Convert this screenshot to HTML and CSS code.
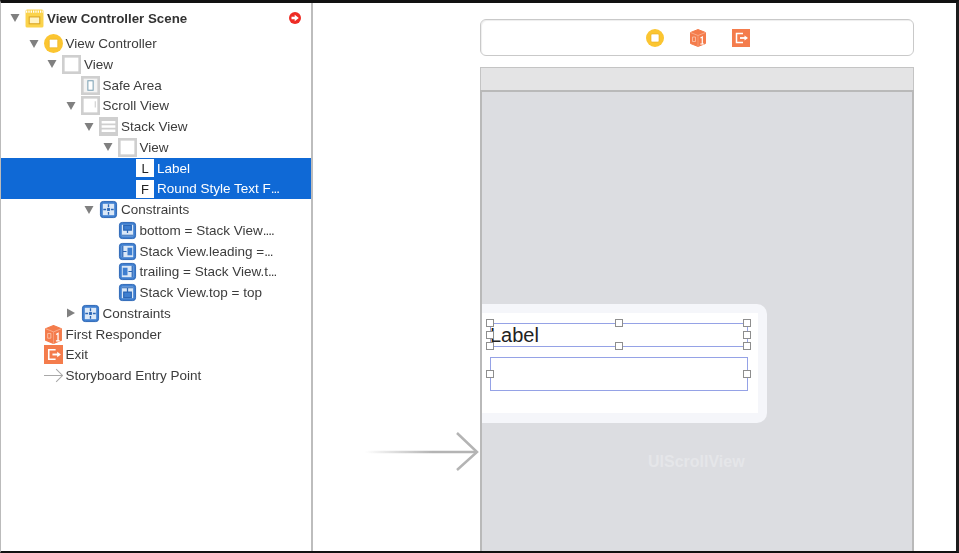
FILE: index.html
```html
<!DOCTYPE html>
<html lang="en">
<head>
  <meta charset="UTF-8">
  <title>View Controller Scene</title>
  <link rel="stylesheet" href="styles.css">
</head>
<body>
<svg class="defs" width="0" height="0">
  <symbol id="i-down" viewBox="0 0 12 12"><path d="M1.500 2h9L6 10z" fill="#808080"/></symbol>
  <symbol id="i-right" viewBox="0 0 12 12"><path d="M2 1.500v9L10 6z" fill="#808080"/></symbol>
  <symbol id="i-scene" viewBox="0 0 18 18">
    <rect x="0.500" y="0.500" width="17" height="17" rx="1.500" fill="#fbd34b"/>
    <path d="M1 2.500h16" stroke="#fff" stroke-width="2" stroke-dasharray="1.200 1"/>
    <rect x="4" y="7.500" width="10" height="6.500" fill="#fff3c4" stroke="#d9a520"/>
  </symbol>
  <symbol id="i-vc" viewBox="0 0 18 18">
    <circle cx="9" cy="9" r="9" fill="#fbc531"/>
    <rect x="5" y="5" width="8" height="8" rx="1" fill="#fff" stroke="#e7ad1c" stroke-width="0.600"/>
  </symbol>
  <symbol id="i-view" viewBox="0 0 18 18">
    <rect width="18" height="18" fill="#cfcfcf"/>
    <rect x="2.500" y="2.500" width="13" height="13" fill="#fff"/>
  </symbol>
  <symbol id="i-safe" viewBox="0 0 18 18">
    <rect width="18" height="18" fill="#cfcfcf"/>
    <rect x="2.500" y="2.500" width="13" height="13" fill="#f4f4f4"/>
    <rect x="6.500" y="4.500" width="5" height="9" fill="#fff" stroke="#7ea3b5"/>
  </symbol>
  <symbol id="i-scroll" viewBox="0 0 18 18">
    <rect width="18" height="18" fill="#cfcfcf"/>
    <rect x="2.500" y="2.500" width="13" height="13" fill="#fff"/>
    <path d="M13.500 5v6" stroke="#ccc"/>
  </symbol>
  <symbol id="i-stack" viewBox="0 0 18 18">
    <rect width="18" height="18" fill="#cfcfcf"/>
    <path d="M2.500 5h13M2.500 9h13M2.500 13h13" stroke="#fff" stroke-width="2.400"/>
  </symbol>
  <symbol id="i-group" viewBox="-1 -1 20 20">
    <rect x="0.500" y="0.500" width="17" height="17" rx="3" fill="#3f7fd0" stroke="#2b66b5"/>
    <rect x="3" y="3" width="12" height="12" fill="#dbe8f7"/>
    <path d="M9 3.500v3M9 11.500v3M3.500 9h3M11.500 9h3" stroke="#2b66b5" stroke-width="1.400"/>
    <rect x="7.500" y="7.500" width="3" height="3" fill="#2b66b5"/>
  </symbol>
  <symbol id="i-bottom" viewBox="-1 -1 20 20">
    <rect x="0.500" y="0.500" width="17" height="17" rx="3" fill="#3f7fd0" stroke="#2b66b5"/>
    <rect x="3" y="3" width="12" height="12" fill="#dbe8f7"/>
    <path d="M5 3.500h8v5H5zM9 8.500v3M3 14h12" fill="#3f7fd0" stroke="#2b66b5" stroke-width="1.300"/>
  </symbol>
  <symbol id="i-leading" viewBox="-1 -1 20 20">
    <rect x="0.500" y="0.500" width="17" height="17" rx="3" fill="#3f7fd0" stroke="#2b66b5"/>
    <rect x="3" y="3" width="12" height="12" fill="#dbe8f7"/>
    <path d="M4 3v12M4 9h4" stroke="#2b66b5" stroke-width="1.300"/>
    <rect x="9" y="5" width="5" height="8" fill="#3f7fd0"/>
  </symbol>
  <symbol id="i-trailing" viewBox="-1 -1 20 20">
    <rect x="0.500" y="0.500" width="17" height="17" rx="3" fill="#3f7fd0" stroke="#2b66b5"/>
    <rect x="3" y="3" width="12" height="12" fill="#dbe8f7"/>
    <path d="M14 3v12M10 9h4" stroke="#2b66b5" stroke-width="1.300"/>
    <rect x="4" y="5" width="5" height="8" fill="#3f7fd0"/>
  </symbol>
  <symbol id="i-top" viewBox="-1 -1 20 20">
    <rect x="0.500" y="0.500" width="17" height="17" rx="3" fill="#3f7fd0" stroke="#2b66b5"/>
    <rect x="3" y="3" width="12" height="12" fill="#dbe8f7"/>
    <path d="M3 4h12M9 4v4M5 8.500h8v6H5z" fill="#3f7fd0" stroke="#2b66b5" stroke-width="1.300"/>
  </symbol>
  <symbol id="i-cube" viewBox="0 0 18 18">
    <path d="M9 0.500l7.500 3v11l-7.500 3-7.500-3v-11z" fill="#f47c4c" stroke="#f47c4c" stroke-linejoin="round"/>
    <path d="M1.500 3.500L9 6.500l7.500-3" fill="none" stroke="#f9ae8e" stroke-width="0.900"/>
    <path d="M9 6.500V18" stroke="#f9ae8e" stroke-width="0.600"/>
    <path d="M3.500 8h3v4.500h-3z" fill="none" stroke="#fbc8b0" stroke-width="0.800"/>
    <path d="M11.500 9l1.800-1v7M11.300 15h3.600" fill="none" stroke="#fff" stroke-width="1.200"/>
  </symbol>
  <symbol id="i-exit" viewBox="0 0 18 18">
    <rect width="18" height="18" fill="#f47c4c"/>
    <path d="M11 4.500H4.500v9H11" fill="none" stroke="#fff" stroke-width="1.500"/>
    <path d="M8 9h5.500" stroke="#fff" stroke-width="1.800"/>
    <path d="M12.500 6.500L16 9l-3.500 2.500z" fill="#fff"/>
  </symbol>
  <symbol id="i-entry" viewBox="0 0 18 18">
    <path d="M0 9h17M11.500 3l6 6-6 6" fill="none" stroke="#a9a9a9" stroke-width="1"/>
  </symbol>
</svg>

<div class="screen">
  <aside class="outline">
    <div class="row scene d0">
      <svg class="tri"><use href="#i-down"/></svg>
      <svg class="ico"><use href="#i-scene"/></svg>
      <span class="name">View Controller Scene</span>
      <svg class="warn" viewBox="0 0 12 12"><circle cx="6" cy="6" r="6" fill="#ee2b24"/><path d="M2.500 4.800h3.200V2.800L9.800 6 5.700 9.200V7.200H2.500z" fill="#fff"/></svg>
    </div>
    <div class="row d1"><svg class="tri"><use href="#i-down"/></svg><svg class="ico"><use href="#i-vc"/></svg><span class="name">View Controller</span></div>
    <div class="row d2"><svg class="tri"><use href="#i-down"/></svg><svg class="ico"><use href="#i-view"/></svg><span class="name">View</span></div>
    <div class="row d3"><span class="tri"></span><svg class="ico"><use href="#i-safe"/></svg><span class="name">Safe Area</span></div>
    <div class="row d3"><svg class="tri"><use href="#i-down"/></svg><svg class="ico"><use href="#i-scroll"/></svg><span class="name">Scroll View</span></div>
    <div class="row d4"><svg class="tri"><use href="#i-down"/></svg><svg class="ico"><use href="#i-stack"/></svg><span class="name">Stack View</span></div>
    <div class="row d5"><svg class="tri"><use href="#i-down"/></svg><svg class="ico"><use href="#i-view"/></svg><span class="name">View</span></div>
    <div class="row d6 sel"><span class="tri"></span><span class="ico letter">L</span><span class="name">Label</span></div>
    <div class="row d6 sel"><span class="tri"></span><span class="ico letter">F</span><span class="name">Round Style Text F<span class="dots">...</span></span></div>
    <div class="row d4"><svg class="tri"><use href="#i-down"/></svg><svg class="ico"><use href="#i-group"/></svg><span class="name">Constraints</span></div>
    <div class="row d5"><span class="tri"></span><svg class="ico"><use href="#i-bottom"/></svg><span class="name">bottom = Stack View<span class="dots">....</span></span></div>
    <div class="row d5"><span class="tri"></span><svg class="ico"><use href="#i-leading"/></svg><span class="name">Stack View.leading =<span class="dots">...</span></span></div>
    <div class="row d5"><span class="tri"></span><svg class="ico"><use href="#i-trailing"/></svg><span class="name">trailing = Stack View.t<span class="dots">...</span></span></div>
    <div class="row d5"><span class="tri"></span><svg class="ico"><use href="#i-top"/></svg><span class="name">Stack View.top = top</span></div>
    <div class="row d3"><svg class="tri"><use href="#i-right"/></svg><svg class="ico"><use href="#i-group"/></svg><span class="name">Constraints</span></div>
    <div class="row d1"><span class="tri"></span><svg class="ico"><use href="#i-cube"/></svg><span class="name">First Responder</span></div>
    <div class="row d1"><span class="tri"></span><svg class="ico"><use href="#i-exit"/></svg><span class="name">Exit</span></div>
    <div class="row d1"><span class="tri"></span><svg class="ico"><use href="#i-entry"/></svg><span class="name">Storyboard Entry Point</span></div>
  </aside>

  <main class="canvas">
    <div class="dock">
      <svg class="dock-ico"><use href="#i-vc"/></svg>
      <svg class="dock-ico"><use href="#i-cube"/></svg>
      <svg class="dock-ico"><use href="#i-exit"/></svg>
    </div>
    <div class="status-bar"></div>
    <div class="device">
      <div class="card">
        <div class="card-inner">
          <div class="sel-box label-box">
            <span class="label-text">Label</span>
            <i class="h tl"></i><i class="h tc"></i><i class="h tr"></i>
            <i class="h ml"></i><i class="h mr"></i>
            <i class="h bl"></i><i class="h bc"></i><i class="h br"></i>
          </div>
          <div class="sel-box field-box">
            <i class="h ml"></i><i class="h mr"></i>
          </div>
        </div>
      </div>
      <div class="scroll-name">UIScrollView</div>
    </div>
    <svg class="entry-arrow" width="116" height="40" viewBox="0 0 116 40">
      <defs>
        <linearGradient id="fade" x1="0" x2="1" y1="0" y2="0">
          <stop offset="0" stop-color="#b4b4b4" stop-opacity="0"/>
          <stop offset="0.6" stop-color="#b4b4b4"/>
        </linearGradient>
      </defs>
      <rect x="0" y="18.750" width="112" height="2.500" fill="url(#fade)"/>
      <path d="M92 1L112 20 92 38" fill="none" stroke="#b4b4b4" stroke-width="2.500"/>
    </svg>
  </main>
</div>
</body>
</html>
```

FILE: styles.css
```css
html, body { margin: 0; padding: 0; height: 553px; overflow: hidden; background: #fff; }
body { font-family: "Liberation Sans", Arial, sans-serif; font-size: 13.5px; color: #3c3c3c; }
.defs { position: absolute; }

.screen { display: flex; height: 553px; box-sizing: border-box; border-top: 3px solid #111; border-bottom: 2px solid #111; border-left: 1px solid #bbb; border-right: 3px solid #1c1c1c; filter: blur(0.35px); }

/* outline */
.outline { width: 310px; flex: none; border-right: 2px solid #bdbdbd; padding-top: 5px; }
.row { display: flex; align-items: center; height: 20.75px; }
.row.scene { height: 20px; margin-bottom: 5.25px; font-size: 13.3px; font-weight: bold; color: #333; }
.d0 { padding-left: 5px; }
.d1 { padding-left: 23.5px; }
.d2 { padding-left: 42px; }
.d3 { padding-left: 60.5px; }
.d4 { padding-left: 79px; }
.d5 { padding-left: 97.5px; }
.d6 { padding-left: 116px; }
.tri { width: 12px; height: 12px; margin: 0 3px; flex: none; }
.ico { width: 19px; height: 19px; margin-left: 1px; flex: none; }
.name { margin-left: 3px; white-space: nowrap; }
.dots { letter-spacing: -1px; }
.warn { width: 12px; height: 12px; margin-left: auto; margin-right: 10px; }
.sel { background: #0f69d6; color: #fff; }
.letter { background: #fff; color: #222; font-size: 13px; text-align: center; line-height: 19px; width: 18px; height: 18px; }

/* canvas */
.canvas { flex: 1; position: relative; overflow: hidden; display: flex; flex-direction: column; padding: 16px 42px 0 167px; }
.dock { height: 35px; flex: none; border: 1px solid #c9c9c9; border-radius: 6px; display: flex; justify-content: center; align-items: center; gap: 25px; padding-left: 2px; box-shadow: inset 1px 1px 1px #eee; }
.dock-ico { width: 18px; height: 18px; }
.status-bar { height: 22px; flex: none; margin-top: 11px; background: #e4e4e5; border: 1px solid #c4c4c4; border-bottom: 0; }
.device { flex: 1; box-sizing: border-box; background: #dcdde1; border: 2px solid #b9b9b9; border-bottom: 0; padding-top: 212px; }
.card { width: 285px; height: 119px; box-sizing: border-box; background: #f5f6fa; padding: 9px 9px 10px 0; border-radius: 0 10px 10px 0; }
.card-inner { background: #fff; height: 100px; padding: 10px 10px 0 8px; box-sizing: border-box; }
.sel-box { position: relative; border: 1px solid #95a2e6; box-sizing: border-box; }
.label-box { height: 24px; margin-bottom: 10px; }
.field-box { height: 34px; }
.label-text { font-size: 20px; color: #222; line-height: 22px; display: block; margin-left: -1px; }
.h { position: absolute; width: 6px; height: 6px; background: #fff; border: 1px solid #8e8e8e; }
.tl, .tc, .tr { top: -5px; }
.bl, .bc, .br { bottom: -4px; }
.ml, .mr { top: calc(50% - 4px); }
.tl, .ml, .bl { left: -5px; }
.tr, .mr, .br { right: -4px; }
.tc, .bc { left: calc(50% - 4px); }
.scroll-name { margin: 30px 0 0 166px; color: #e5e6e9; font-size: 16px; font-weight: bold; }
.entry-arrow { position: absolute; left: 52px; top: 429px; }
```
